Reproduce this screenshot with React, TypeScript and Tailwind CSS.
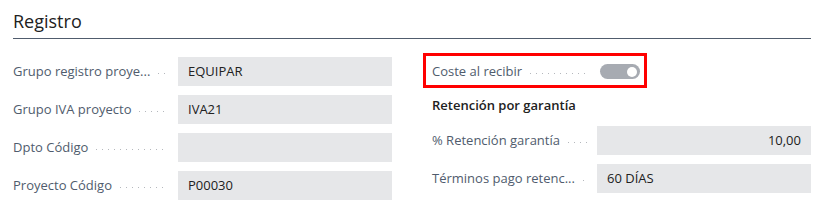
import type { ReactNode } from "react";

const font = { fontFamily: '"Open Sans", "Noto Sans", sans-serif' };

function Leader() {
  return (
    <span className="ml-[8px] mr-[10px] mt-[3px] h-px flex-1 bg-[linear-gradient(to_right,#b5b8bd_1px,transparent_1px)] bg-[length:6px_1px] bg-repeat-x" />
  );
}

function Field({ label, value, right }: { label: string; value?: string; right?: boolean }) {
  return (
    <div className="flex h-[29px] items-center">
      <div className="flex w-[165px] shrink-0 items-center">
        <span className="whitespace-nowrap text-[13px] text-[#505c6d]">{label}</span>
        <Leader />
      </div>
      <div
        className={`flex h-full flex-1 items-center bg-[#e6e7e9] px-[10px] text-[13px] text-[#212121] ${
          right ? "justify-end" : ""
        }`}
      >
        {value}
      </div>
    </div>
  );
}

function Column({ children }: { children: ReactNode }) {
  return <div className="flex flex-col">{children}</div>;
}

export default function App() {
  return (
    <div className="h-[219px] w-[824px] bg-white px-[13px] pt-[9px]" style={font}>
      <h2 className="border-b border-[#505c6d] pb-[5px] text-[18px] leading-[24px] text-[#212121]">Registro</h2>
      <div className="grid grid-cols-2 gap-x-[40px] pt-[18px]">
        <Column>
          <div className="flex flex-col gap-[9px]">
            <Field label="Grupo registro proye..." value="EQUIPAR" />
            <Field label="Grupo IVA proyecto" value="IVA21" />
            <Field label="Dpto Código" />
            <Field label="Proyecto Código" value="P00030" />
          </div>
        </Column>
        <Column>
          <div className="relative flex h-[29px] items-center">
            <div className="flex w-[165px] shrink-0 items-center">
              <span className="whitespace-nowrap text-[13px] text-[#505c6d]">Coste al recibir</span>
              <Leader />
            </div>
            <div className="ml-[3px] flex h-[15px] w-[40px] items-center justify-end rounded-full bg-[#a7abb2] pr-[3px]">
              <span className="h-[10px] w-[10px] rounded-full bg-white" />
            </div>
            <div className="absolute -left-[9px] -top-[4px] h-[35px] w-[224px] border-[3px] border-[#ff0000]" />
          </div>
          <div className="flex h-[40px] items-center text-[13px] font-semibold text-[#212121]">
            Retención por garantía
          </div>
          <div className="flex flex-col gap-[9px]">
            <Field label="% Retención garantía" value="10,00" right />
            <Field label="Términos pago retenc..." value="60 DÍAS" />
          </div>
        </Column>
      </div>
    </div>
  );
}
